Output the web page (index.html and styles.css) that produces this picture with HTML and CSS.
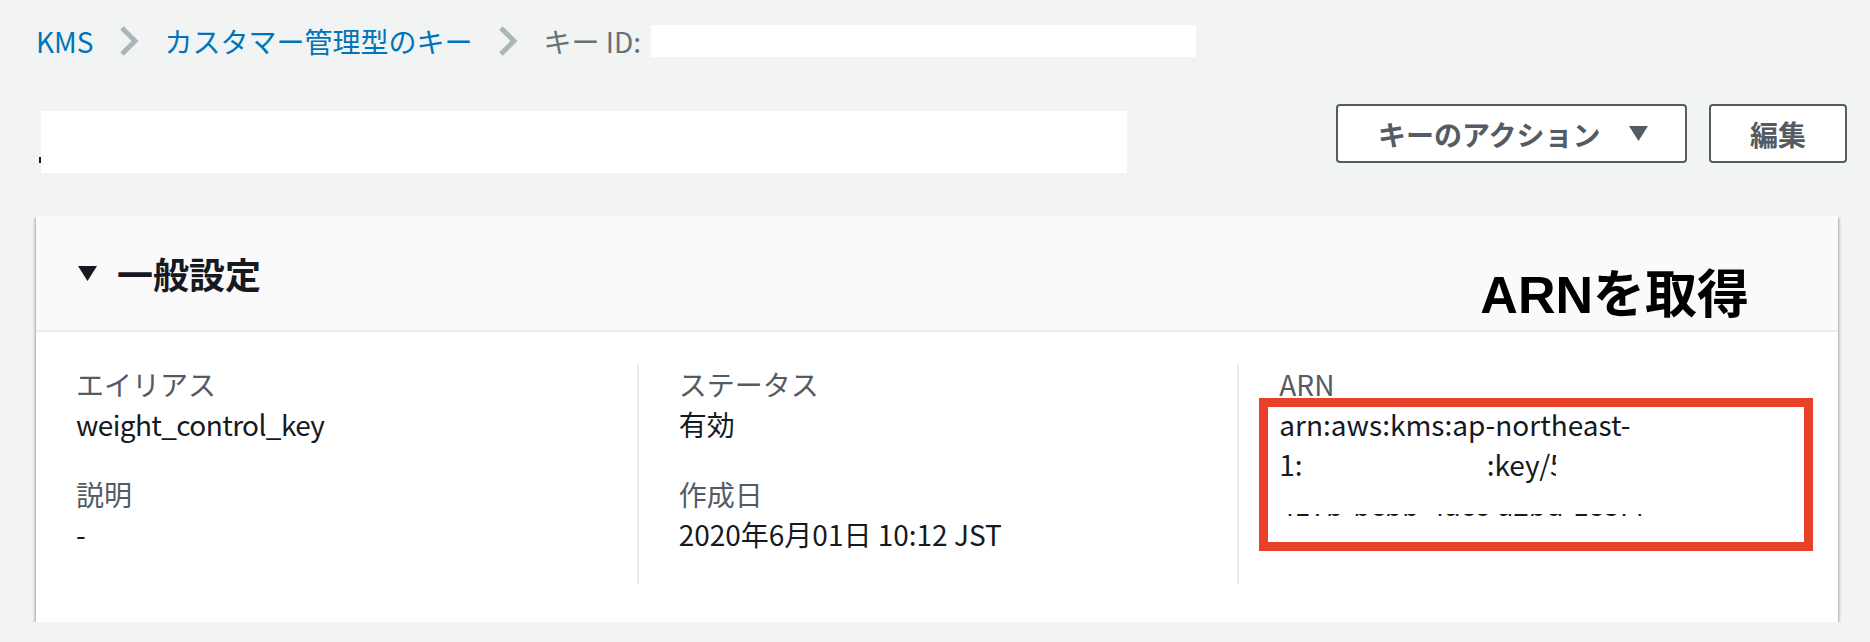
FILE: index.html
```html
<!DOCTYPE html>
<html lang="ja">
<head>
<meta charset="utf-8">
<title>KMS キー</title>
<link rel="stylesheet" href="styles.css">
</head>
<body>
<div class="page">
  <nav class="crumbs">
    <a class="crumb-link" href="#">KMS</a>
    <svg class="chev" viewBox="0 0 20 30" aria-hidden="true"><polyline points="3,2 16,15 3,28" fill="none" stroke="#aab7b8" stroke-width="5"/></svg>
    <a class="crumb-link" href="#">カスタマー管理型のキー</a>
    <svg class="chev" viewBox="0 0 20 30" aria-hidden="true"><polyline points="3,2 16,15 3,28" fill="none" stroke="#aab7b8" stroke-width="5"/></svg>
    <span class="crumb-current">キー ID:</span>
    <span class="redact crumb-redact"></span>
  </nav>

  <header class="head">
    <div class="title">
      <span class="title-frag"></span>
      <span class="redact title-redact"></span>
    </div>
    <div class="actions">
      <button class="btn btn-action" type="button">キーのアクション
        <svg class="caret" viewBox="0 0 19 15" aria-hidden="true"><polygon points="0,0 19,0 9.5,15" fill="#545b64"/></svg>
      </button>
      <button class="btn btn-edit" type="button">編集</button>
    </div>
  </header>

  <section class="card">
    <div class="card-head">
      <h2 class="card-title">
        <svg class="tri" viewBox="0 0 19 15" aria-hidden="true"><polygon points="0,0 19,0 9.5,15" fill="#16191f"/></svg>
        一般設定
      </h2>
      <div class="note">ARNを取得</div>
    </div>
    <div class="card-body">
      <div class="col">
        <div class="kv">
          <div class="kv-label">エイリアス</div>
          <div class="kv-value latin">weight_control_key</div>
        </div>
        <div class="kv">
          <div class="kv-label">説明</div>
          <div class="kv-value">-</div>
        </div>
      </div>
      <div class="col">
        <div class="kv">
          <div class="kv-label">ステータス</div>
          <div class="kv-value">有効</div>
        </div>
        <div class="kv">
          <div class="kv-label">作成日</div>
          <div class="kv-value">2020年6月01日 10:12 JST</div>
        </div>
      </div>
      <div class="col col-arn">
        <div class="kv">
          <div class="kv-label">ARN</div>
          <div class="kv-value">
            <div>arn:aws:kms:ap-northeast-</div>
            <div>1:<span class="gap"></span>:key/<span class="clip">5</span></div>
            <div class="hidden-line">417b-bcbb-4acc-a2bd-185f4</div>
          </div>
        </div>
        <div class="mark"></div>
      </div>
    </div>
  </section>
</div>
</body>
</html>
```

FILE: styles.css
```css
html, body {
  margin: 0;
  background: #f2f3f3;
}

body {
  font-family: "Noto Sans CJK JP", "Noto Sans", sans-serif;
  color: #16191f;
}

.page {
  padding: 21px 23px 0 36px;
}

/* breadcrumbs */
.crumbs {
  display: flex;
  align-items: center;
  height: 40px;
  font-size: 28px;
  line-height: 40px;
}

.crumb-link {
  color: #0073bb;
  text-decoration: none;
}

.chev {
  flex: none;
  width: 20px;
  height: 30px;
  margin: 0 26px 0 25px;
}

.crumb-current {
  color: #687078;
}

.redact {
  display: block;
  background: #ffffff;
}

.crumb-redact {
  width: 545px;
  height: 32px;
  margin-left: 10px;
}

/* header */
.head {
  display: flex;
  justify-content: space-between;
  align-items: flex-start;
  margin-top: 43px;
}

.title {
  display: flex;
  align-items: flex-end;
  margin-top: 7px;
}

.title-frag {
  width: 2px;
  height: 6px;
  margin: 0 0 10px 3px;
  background: #16191f;
}

.title-redact {
  width: 1086px;
  height: 62px;
}

.actions {
  display: flex;
  gap: 22px;
}

.btn {
  box-sizing: border-box;
  height: 59px;
  display: flex;
  align-items: center;
  justify-content: center;
  padding: 0;
  border: 2px solid #545b64;
  border-radius: 4px;
  background: #ffffff;
  color: #545b64;
  font-family: "Noto Sans CJK JP", sans-serif;
  font-weight: 700;
  font-size: 28px;
  line-height: 1;
}

.btn-action {
  width: 351px;
  justify-content: flex-start;
  padding-left: 40px;
  gap: 28px;
}

.caret {
  width: 19px;
  height: 15px;
}

.btn-edit {
  width: 138px;
}

/* card */
.card {
  margin: 43px 9px 0 0;
  background: #ffffff;
  box-shadow: 0 2px 2px rgba(0, 28, 36, 0.3), 2px 2px 2px rgba(0, 28, 36, 0.15), -2px 2px 2px rgba(0, 28, 36, 0.15);
}

.card-head {
  display: flex;
  align-items: center;
  height: 114px;
  padding: 0 89px 0 42px;
  background: #fafafa;
  border-bottom: 2px solid #eaeded;
}

.card-title {
  display: flex;
  align-items: center;
  gap: 20px;
  margin: 0;
  font-size: 36px;
  line-height: 44px;
  font-weight: 700;
  color: #16191f;
}

.tri {
  width: 19px;
  height: 15px;
}

.note {
  margin-left: auto;
  align-self: flex-end;
  margin-bottom: 9px;
  font-family: "Liberation Sans", "Noto Sans CJK JP", sans-serif;
  font-weight: 700;
  font-size: 52px;
  line-height: 52px;
  color: #000000;
}

.card-body {
  display: grid;
  grid-template-columns: repeat(3, 1fr);
  padding: 32px 0 38px;
}

.col {
  position: relative;
  padding: 0 40px;
}

.col + .col {
  border-left: 2px solid #eaeded;
}

.kv {
  margin-bottom: 30px;
  font-size: 28px;
  line-height: 40px;
}

.kv-label {
  color: #545b64;
}

.kv-value {
  color: #16191f;
}

.latin {
  letter-spacing: -0.6px;
}

.gap {
  display: inline-block;
  width: 184px;
  height: 1px;
}

.clip {
  display: inline-block;
  width: 6px;
  height: 40px;
  overflow: hidden;
  vertical-align: top;
}

.hidden-line {
  position: relative;
}

.hidden-line::after {
  content: "";
  position: absolute;
  left: -4px;
  right: 0;
  top: 0;
  height: 30px;
  background: #ffffff;
}

.mark {
  position: absolute;
  left: 20px;
  top: 34px;
  box-sizing: border-box;
  width: 554px;
  height: 153px;
  border: 9px solid #e9402a;
  pointer-events: none;
}
```
